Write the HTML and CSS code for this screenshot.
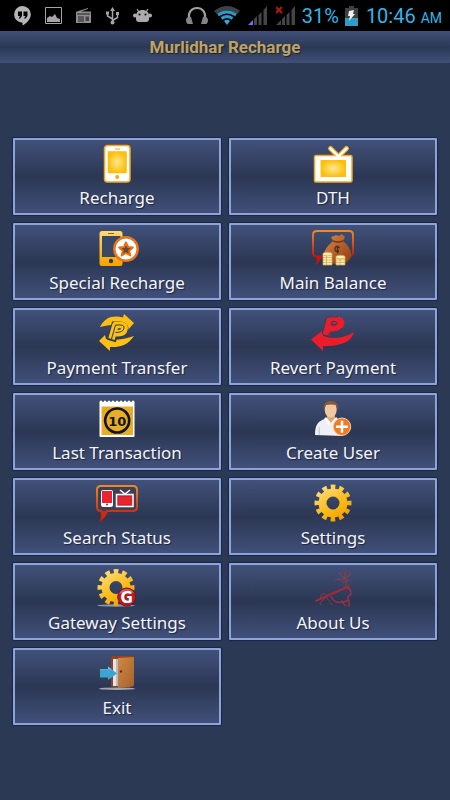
FILE: index.html
```html
<!DOCTYPE html>
<html lang="en">
<head>
    <meta charset="UTF-8">
    <meta name="viewport" content="width=device-width, initial-scale=1.0">
    <title>Murlidhar Recharge</title>
    <link rel="stylesheet" href="styles.css">
</head>
<body>
    <div class="status-bar">
        <div class="status-left">
            <svg width="17" height="20" viewBox="0 0 17 20"><path fill="#b5b5b5" d="M8.500 0a8.300 8.300 0 0 1 8.300 8.500c0 4-3.300 8.500-8.300 11v-2.700A8.300 8.300 0 0 1 8.500 0z"/><path fill="#000" d="M4 5.500h4v4.500l-2 2.500H4.500L6 10H4zM9.500 5.500h4v4.500l-2 2.500H10l1.500-2.500h-2z"/></svg>
            <svg width="17" height="17" viewBox="0 0 17 17"><path fill="none" stroke="#a5a5a5" d="M.5.500h16v16H.5z"/><path fill="#a5a5a5" d="M2 15v-4l3-2 2 1 3-3 2 4 3 1v3z"/></svg>
            <svg width="16" height="16" viewBox="0 0 16 16"><path fill="#8e8e8e" d="M1 3.500 12 0v1L5 3.500h10V15H0V4z"/><path fill="none" stroke="#222" d="M1 6h13M2 9h6M2 11h6M2 13h6"/><path fill="#444" d="M9.500 8.500H13V13H9.500z"/></svg>
            <svg width="13" height="18" viewBox="0 0 13 18"><path fill="none" stroke="#a5a5a5" stroke-width="1.500" d="M6.500 2v13M6.500 12 1.500 9V6M6.500 13.500l5-3V7"/><path fill="#a5a5a5" d="M6.500 0 9 4H4zM0 4.500h3v3H0zM10 5h3v3h-3z"/><circle cx="6.500" cy="15.500" r="2" fill="#a5a5a5"/></svg>
            <svg width="19" height="15" viewBox="0 0 19 15"><path stroke="#ababab" stroke-width="1.200" d="m4 1 2 3M15 1l-2 3"/><path fill="#ababab" d="M3 8c0-4 3-6 6.500-6S16 4 16 8v3q0 3-3 3H6q-3 0-3-3z"/><circle cx="2" cy="7.500" r="2" fill="#ababab"/><circle cx="17" cy="7.500" r="2" fill="#ababab"/><circle cx="6.500" cy="6.500" r="1" fill="#000"/><circle cx="12.500" cy="6.500" r="1" fill="#000"/></svg>
        </div>
        <div class="status-right">
            <svg width="22" height="18" viewBox="0 0 22 18"><path fill="none" stroke="#a0a0a0" stroke-width="2" d="M3 11C2 5 6 1 11 1s9 4 8 10"/><path fill="#858585" d="M0 13c0-3 3-4 5-3l2 7H2c-1 0-2-2-2-4zM22 13c0-3-3-4-5-3l-2 7h5c1 0 2-2 2-4z"/></svg>
            <svg width="26" height="19" viewBox="0 0 26 19"><path fill="#3b4347" d="M0 5q13-10 26 0l-3 3Q13 1 3 8z"/><path fill="none" stroke="#2c9bc8" stroke-width="3" d="M4 9q9-6 18 0M7.500 12.500q5.500-4 11 0"/><path fill="#35a9d8" d="M10 15q3-2.500 6 0l-3 4z"/></svg>
            <svg class="signal" width="20" height="19" viewBox="0 0 20 19"><path fill="#8565ff" d="M0 19h5v-5z"/><path fill="#454545" d="M6 13l3-3v9H6zM10.500 9l3-3v13h-3zM15.500 4 19 0v19h-3.500z"/></svg>
            <svg class="signal" width="20" height="19" viewBox="0 0 20 19"><path fill="#454545" d="M0 19h5v-5zM6 13l3-3v9H6zM10.500 9l3-3v13h-3zM15.500 4 19 0v19h-3.500z"/><path stroke="#b51414" stroke-width="2" d="m0 1 6 6M6 1 0 7"/></svg>
            <span>31%</span>
            <svg class="battery" width="13" height="20" viewBox="0 0 13 20"><path fill="#3d4144" d="M4 0h5v2h4v10H0V2h4z"/><path fill="#319bc5" d="M0 12h13v8H0z"/><path fill="#f2f2f2" d="m4 5 5-1-1 4h2l-6 7 1-5H3z"/></svg>
            <span>10:46 <small>AM</small></span>
        </div>
    </div>
    <h1>Murlidhar Recharge</h1>

    <svg class="defs" width="0" height="0">
        <defs>
            <radialGradient id="glow"><stop offset="0" stop-color="#ffe794"/><stop offset="1" stop-color="#fcc00a"/></radialGradient>
            <linearGradient id="gold" x2="0" y2="1"><stop offset="0" stop-color="#ffda73"/><stop offset="1" stop-color="#f4a400"/></linearGradient>
            <linearGradient id="orange" x2="0" y2="1"><stop offset="0" stop-color="#f08a1d"/><stop offset="1" stop-color="#c3150e"/></linearGradient>
            <linearGradient id="bag" x2="1" y2="1"><stop offset="0" stop-color="#dc8744"/><stop offset="1" stop-color="#8e3b13"/></linearGradient>
            <linearGradient id="door" x2="1" y2="1"><stop offset="0" stop-color="#cd8a47"/><stop offset="1" stop-color="#a96028"/></linearGradient>
            <linearGradient id="gear" gradientUnits="userSpaceOnUse" x1="-12" y1="-16" x2="10" y2="18"><stop offset="0" stop-color="#ffdc78"/><stop offset=".6" stop-color="#fbb914"/><stop offset="1" stop-color="#f09c00"/></linearGradient>
            <g id="cog" fill="none" stroke="url(#gear)">
                <circle r="10.500" stroke-width="8"/>
                <circle r="16" stroke-width="5" pathLength="120" stroke-dasharray="5.500 4.500" stroke-dashoffset="2.700"/>
            </g>
        </defs>
    </svg>

    <main class="menu">
        <button>
            <svg viewBox="0 0 48 40"><rect x="11.500" y=".5" width="25.500" height="36.500" rx="3" fill="#fff" stroke="#f7a51b" stroke-width="1.500"/><path fill="url(#glow)" stroke="#f4b21d" stroke-width=".5" d="M15 6.500h18.500v21.500H15z"/><path stroke="#f7a51b" d="M22 4h5"/><circle cx="24.200" cy="32" r="2" fill="#f7a51b"/></svg>
            <span>Recharge</span>
        </button>
        <button>
            <svg viewBox="0 0 48 40"><path fill="none" stroke="#f7a51b" stroke-width="5" stroke-linecap="round" d="m21.500 3.500 8 8 8-8"/><rect x="5.500" y="10.500" width="37.500" height="26.500" rx="1.500" fill="#fff" stroke="#f7a51b" stroke-width="1.500"/><path fill="none" stroke="#fff" stroke-width="2.500" stroke-linecap="round" d="m21.500 3.500 8 8 8-8"/><path fill="url(#glow)" d="M11.500 15h25.500v17H11.500z"/></svg>
            <span>DTH</span>
        </button>
        <button>
            <svg viewBox="0 0 48 40"><rect x="6.500" y="1" width="23" height="35" rx="2.500" fill="url(#gold)"/><path fill="#3a4868" d="M9 6h18.500v21H9z"/><path stroke="#8a6420" d="M15 3.500h6"/><circle cx="18" cy="31" r="2.200" fill="#3b3a3b"/><circle cx="33" cy="19" r="11.700" fill="#fff" stroke="#ed7418" stroke-width="2.500"/><path fill="#684832" stroke="#ed6d12" stroke-width="2" stroke-linejoin="round" d="m33 12.500 2 4.500 4.800.500-3.600 3.200 1.100 4.800-4.300-2.500-4.300 2.500 1.100-4.800-3.600-3.200 4.800-.5z"/></svg>
            <span>Special Recharge</span>
        </button>
        <button>
            <svg viewBox="0 0 48 40"><path fill="none" stroke="url(#orange)" stroke-width="2" d="M13 26.500H8q-4 0-4-4V5q0-4 4-4h32q4 0 4 4v17q0 4-4 4h-3"/><path fill="#c3150e" d="M7 26h6l-1 3q-2 4-6 6 3-4 1-9z"/><path fill="url(#bag)" d="M24 11 22 7l3-1 2-1 3 1 3-2 3 3-2 4c5 4 9 10 8 15-1 6-7 8-14 8s-13-3-13-9c0-6 5-10 9-14z"/><path fill="none" stroke="#7b3414" stroke-width="1.500" d="M24 11q5 2 10 0"/><path fill="none" stroke="#493024" stroke-width="1.400" d="M31 18q-5-3-5 1 0 3 4 2M28.500 15.500v8"/><g fill="#fff0ae" stroke="#d0a250" stroke-width=".7"><path d="M14 24h9v11h-9zM27 27h9v8h-9z"/><ellipse cx="18.500" cy="24" rx="4.700" ry="1.800"/><ellipse cx="31.500" cy="27" rx="4.700" ry="1.800"/><path d="M14 27.500h9M14 30h9M14 32.500h9M27 30h9M27 32.500h9M17.500 26v9M31 29v6"/></g></svg>
            <span>Main Balance</span>
        </button>
        <button>
            <svg viewBox="0 0 48 40"><path fill="#fdc010" d="M7 12C12 2 20 0 30 2.500L31-1l10 9-6 7-1-4C25 8 17 10 7 12zM41 21c-6 9-14 11.500-24 11v4L6 26l6-6 1 4c9 2 19 0 28-3z"/><path fill="none" stroke="#2f3d5b" stroke-width="9" d="m18.500 26 4-15h4q6 0 4 5-1 3-9 3"/><path fill="none" stroke="#fdc010" stroke-width="6.500" stroke-linejoin="round" d="m18.500 24 4-14h5q5 0 4 4-1 5-9 4"/><path fill="none" stroke="#2f3d5b" stroke-width="1" d="m18.500 24 4-14h5q4 0 3.500 3.500-1 4-8.500 4"/></svg>
            <span>Payment Transfer</span>
        </button>
        <button>
            <svg viewBox="0 0 48 40"><path fill="#ec1c2a" d="M2 24.500 13 16l1 5c12 4 23 1 31-4-2 9-13 15-31 14v5z"/><path fill="none" stroke="#ec1c2a" stroke-width="7" stroke-linejoin="round" d="m17 20 4-15h6q6 0 4.500 4.500T21 14"/><path fill="none" stroke="#33405f" d="m13 19 4-15q1-2 3-2h9M18 22l3-5q9 0 12-4M23 6.500h4q2 1 0 3.500h-5z"/></svg>
            <span>Revert Payment</span>
        </button>
        <button>
            <svg viewBox="0 0 48 40"><rect x="6.500" y="2" width="35" height="35" rx="1" fill="#fff"/><path fill="none" stroke="#fff" stroke-width="3" stroke-linecap="round" stroke-dasharray="0 4" d="M8 2h34"/><path fill="#e8ae27" d="M8.500 6.500h31.500V35H8.500z"/><path stroke="#d3981a" d="m9 13 6-6M9 22 24 7M18 34l21-21M28 34l11-11"/><circle cx="24.200" cy="20.500" r="12" fill="#e8ae27" stroke="#151310" stroke-width="2.600"/><text class="ten" x="24.200" y="25.500">10</text></svg>
            <span>Last Transaction</span>
        </button>
        <button>
            <svg viewBox="0 0 48 40"><path fill="#eef0f6" d="M6 35c0-10 3-14 10-16l6 3 6-3c5 2 6 7 6 17z"/><path fill="#c8cfdd" d="M10 35q-2-5 1-9v9z"/><path fill="#dda877" d="M18 14h8v5l-4 5-4-4z"/><path fill="#fff" d="m17 17 5 6-2 3-5-7zM27 17l-5 6 3 3 4-7z"/><ellipse cx="21.700" cy="9.500" rx="6" ry="8" fill="#f1c8a0"/><path fill="#895a35" d="M15 10C14 4 17 1 22 1s8 3 7 9l-2-5q-5-1-10 0z"/><circle cx="33" cy="26.700" r="8.700" fill="#f27b20" stroke="#fac9a5" stroke-width="1"/><path stroke="#fff" stroke-width="2.500" d="M27 26.700h12M33 20.700v12"/></svg>
            <span>Create User</span>
        </button>
        <button>
            <svg viewBox="0 0 48 40"><path fill="#3d4055" stroke="url(#orange)" stroke-width="2" d="M8 1h32q4 0 4 4v17q0 4-4 4H14q-2 6-6 9 2-5 0-9-4 0-4-4V5q0-4 4-4z"/><path fill="#cf2a11" d="M7 26h7q-2 6-6 9 2-5-1-9z"/><rect x="8.500" y="5.500" width="11" height="16" rx="1" fill="#ed2430" stroke="#fff"/><path fill="#fff" d="M9 18h10v3H9z"/><circle cx="14" cy="19.500" r="1" fill="#d51b28"/><path fill="none" stroke="#fff" stroke-width="1.500" d="m27 5 5 4 5-4"/><path fill="#ed2430" stroke="#fff" stroke-width="1.500" d="M23.500 9.500h16.500v12H23.500z"/><path fill="none" stroke="#b52c38" d="M25.500 11.500h12.500v8H25.500z"/></svg>
            <span>Search Status</span>
        </button>
        <button>
            <svg viewBox="0 0 48 40"><use href="#cog" x="24" y="18"/></svg>
            <span>Settings</span>
        </button>
        <button>
            <svg viewBox="0 0 48 40"><ellipse cx="23" cy="35.500" rx="19" ry="1.200" fill="#9299a8"/><use href="#cog" x="23" y="17.500"/><circle cx="33.700" cy="27" r="9" fill="#b51d23" stroke="#811116"/><path fill="#d35b5d" d="M26 24q2-5 8-5 5 0 7 4-7-2-15 1z"/><text class="gee" x="33.700" y="32.500">G</text></svg>
            <span>Gateway Settings</span>
        </button>
        <button>
            <svg viewBox="0 0 48 40"><path fill="none" stroke="#963341" stroke-width="1.500" d="M36 17q7 2 6 7-5 3-2 7v6M40 29q-4 4-8 2M22 26q3 8 11 6l4 4"/><path fill="none" stroke="#7d4053" d="M13 35q-4-1 0-4t5-5q-2-4-6-1l-1 4M18 28q3 4 5 7M26 10q8-1 15 1M29 8q4 4 9 0M31 2q0 5 5 7 5-2 6-8M36 0l-1 9M39 1l-4 8M33 0l-3 4 6 4M42 4l-5 3M37 10v6M33 12q3 2 7-2"/><path stroke="#a62a34" stroke-width="2" d="M6.500 31 40.500 16"/></svg>
            <span>About Us</span>
        </button>
        <button>
            <svg viewBox="0 0 48 40"><ellipse cx="24" cy="33.700" rx="18" ry="1.300" fill="#a5a6b0"/><path fill="#9a3f1c" d="M18 3q0-2 2-2h20v30l-20 1q-2 0-2-2z"/><path fill="#e4e5e7" d="M20 4h6v27h-6z"/><path fill="#b6bac3" d="M23 4h3v27h-3z"/><path fill="url(#door)" d="m25 3 16-1v28l-1 1.500L25 33z"/><circle cx="28" cy="16.500" r="1.200" fill="#702213"/><path fill="#3ba4d2" d="M7 14h8v-2.500l9 7-9 6.500v-2.500H7z"/><path fill="#6ec3e4" d="M7 14h8v-2.500l4 3H7z"/></svg>
            <span>Exit</span>
        </button>
    </main>
</body>
</html>
```
FILE: styles.css
```css
body {
    margin: 0;
    min-height: 100vh;
    background-color: #2c3955;
    font-family: Roboto, Arial, sans-serif;
}
.status-bar {
    display: flex;
    justify-content: space-between;
    align-items: center;
    height: 31px;
    padding: 0 8px 0 14px;
    background-color: #000;
    color: #33b5e5;
    font-size: 20px;
}
.status-left {
    display: flex;
    align-items: center;
    gap: 14px;
}
.status-right {
    display: flex;
    align-items: center;
    gap: 6px;
    white-space: nowrap;
}
.status-right .signal {
    margin-left: 2px;
}
.status-right .battery {
    margin-right: 2px;
}
.status-right small {
    font-size: 14px;
}
h1 {
    margin: 0;
    background: linear-gradient(#415078, #2b3855 50%, #415078);
    color: #bfa362;
    font-size: 17px;
    font-weight: bold;
    line-height: 32px;
    text-align: center;
    text-shadow: 1px 1px 1px #1b2235;
}
.defs {
    display: block;
}
.menu {
    display: grid;
    grid-template-columns: 1fr 1fr;
    gap: 8px;
    padding: 75px 13px;
}
.menu button {
    display: flex;
    flex-direction: column;
    align-items: center;
    padding: 5px 0 2px;
    border: 2px solid #8da4d4;
    border-radius: 1px;
    background: linear-gradient(#42517a, #2b3753 50%, #41507a);
    box-shadow: 0 0 1px 1px #16264f;
    color: #f4f5f8;
    font-family: "Noto Sans", sans-serif;
    font-size: 17px;
    line-height: 26px;
    text-shadow: 1px 1px 1px #1b2440;
    cursor: pointer;
}
.menu svg {
    width: 48px;
    height: 40px;
    overflow: visible;
}
.menu text {
    font-weight: bold;
    text-anchor: middle;
    text-shadow: none;
}
.ten {
    fill: #151310;
    font-family: "DejaVu Sans", sans-serif;
    font-size: 13px;
}
.gee {
    fill: #fff;
    font-family: "DejaVu Sans", sans-serif;
    font-size: 15px;
}
```
